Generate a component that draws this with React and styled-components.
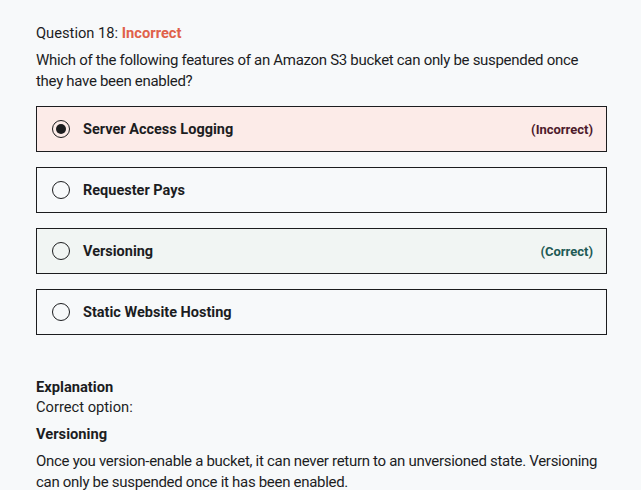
import React from 'react';
import styled, { createGlobalStyle } from 'styled-components';

const GlobalStyle = createGlobalStyle`
  body {
    margin: 0;
    background-color: #f7f9fa;
    font-family: Roboto, "Liberation Sans", sans-serif;
    color: #1c1d1f;
  }
`;

const Page = styled.div`
  width: 571px;
  padding: 24px 0 0 36px;
`;

const Header = styled.div`
  font-size: 14.7px;
  line-height: 18px;
  margin-bottom: 8px;
`;

const Status = styled.span`
  color: #e0614a;
  font-weight: 700;
`;

const Prompt = styled.p`
  margin: 0 0 14px;
  font-size: 15px;
  line-height: 21px;
  letter-spacing: -0.3px;
`;

const Options = styled.div`
  display: flex;
  flex-direction: column;
  gap: 15px;
`;

const Option = styled.div`
  display: flex;
  align-items: center;
  height: 46px;
  box-sizing: border-box;
  padding: 0 13px 0 15px;
  border: 1px solid #1c1d1f;
  background-color: ${p =>
    p.state === 'incorrect' ? '#fcebe8' : p.state === 'correct' ? '#f1f5f3' : '#f7f9fa'};
`;

const Radio = styled.span`
  width: 18px;
  height: 18px;
  box-sizing: border-box;
  border: 1px solid #1c1d1f;
  border-radius: 50%;
  display: flex;
  align-items: center;
  justify-content: center;
  margin-right: 13px;

  &::after {
    content: '';
    display: ${p => (p.checked ? 'block' : 'none')};
    width: 10px;
    height: 10px;
    border-radius: 50%;
    background-color: #1c1d1f;
  }
`;

const Label = styled.span`
  flex: 1;
  font-size: 14.5px;
  font-weight: 700;
`;

const Verdict = styled.span`
  font-size: 13px;
  font-weight: 700;
  color: ${p => (p.state === 'incorrect' ? '#4d1a2c' : '#1e5a55')};
`;

const Explanation = styled.div`
  margin-top: 42px;
  font-size: 14.7px;
  line-height: 20px;
`;

const Heading = styled.div`
  font-weight: 700;
`;

const SubHeading = styled.div`
  font-weight: 700;
  margin-top: 7px;
`;

const Body = styled.p`
  margin: 7px 0 0;
  font-size: 15px;
  line-height: 21px;
  letter-spacing: -0.3px;
`;

const options = [
  { label: 'Server Access Logging', state: 'incorrect', checked: true },
  { label: 'Requester Pays' },
  { label: 'Versioning', state: 'correct' },
  { label: 'Static Website Hosting' },
];

export default function App() {
  return (
    <Page>
      <GlobalStyle />
      <Header>
        Question 18: <Status>Incorrect</Status>
      </Header>
      <Prompt>
        Which of the following features of an Amazon S3 bucket can only be suspended once
        they have been enabled?
      </Prompt>
      <Options>
        {options.map(o => (
          <Option key={o.label} state={o.state}>
            <Radio checked={o.checked} />
            <Label>{o.label}</Label>
            {o.state && (
              <Verdict state={o.state}>
                {o.state === 'incorrect' ? '(Incorrect)' : '(Correct)'}
              </Verdict>
            )}
          </Option>
        ))}
      </Options>
      <Explanation>
        <Heading>Explanation</Heading>
        <div>Correct option:</div>
        <SubHeading>Versioning</SubHeading>
        <Body>
          Once you version-enable a bucket, it can never return to an unversioned state. Versioning
          can only be suspended once it has been enabled.
        </Body>
      </Explanation>
    </Page>
  );
}
